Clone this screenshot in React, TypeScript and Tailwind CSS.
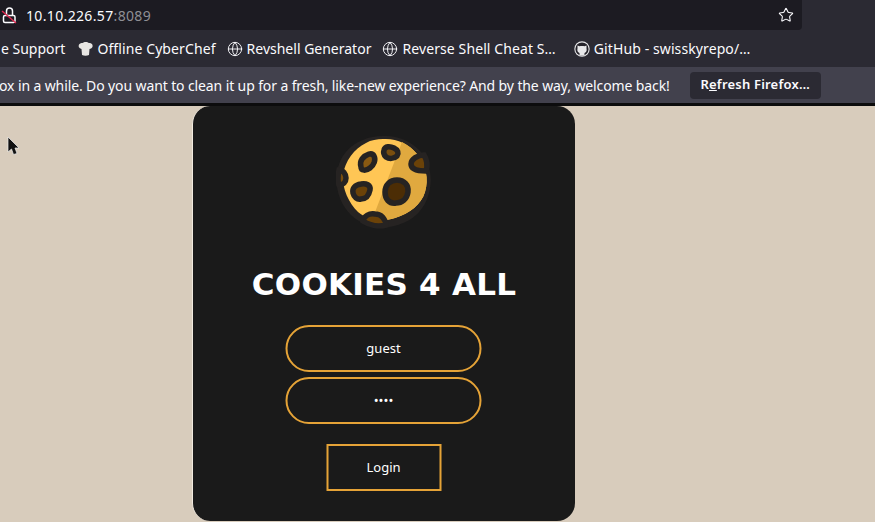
import { Star, Globe } from "lucide-react";

const uiFont = "font-['Noto_Sans',sans-serif]";

function Cookie() {
  return (
    <svg width="96" height="94" viewBox="0 0 96 94" className="block">
      <path d="M47 1 C60 0 74 5 84 16 C94 28 97 42 93 58 C89 74 78 85 62 90 C45 95 28 92 15 80 C4 69 -1 54 1 38 C3 22 13 10 27 5 C33 2 40 1 47 1 Z" fill="#262322" />
      <path d="M47 4 C60 3 73 9 81 19 C90 30 93 44 89 57 C85 70 74 78 59 83 C46 87 33 86 22 77 C13 68 6 54 7 40 C9 26 18 14 30 8 C35 5 41 4 47 4 Z" fill="#ffc655" />
      <path d="M66 7 C72 10 77 14 81 19 C90 30 93 44 89 57 C85 70 74 78 59 83 C52 85 43 86 36 85 Z" fill="#e0a93f" />
      <g stroke="#262322" strokeWidth="5.5">
        <path d="M26 24 C30 19 36 17 38 21 C40 25 38 30 34 33 C30 36 25 36 25 32 C24 29 24 27 26 24 Z" fill="#8a5a12" />
        <path d="M48 15 C49 11 54 11 58 13 C62 15 63 18 61 21 C58 24 53 24 50 22 C48 20 47 18 48 15 Z" fill="#7a4e0e" />
        <path d="M17 58 C16 53 19 50 25 49 C30 48 35 50 34 55 C33 60 30 64 25 64 C21 65 18 62 17 58 Z" fill="#6b4208" />
        <path d="M49 57 C49 50 54 45 61 45 C68 45 73 50 72 57 C71 64 66 68 60 68 C53 69 49 64 49 57 Z" fill="#4c2d05" />
        <path d="M88 20 C82 20 75 24 75 29 C75 34 80 36 90 36 C92 30 91 25 88 20 Z" fill="#6b4208" />
        <path d="M3 35 C7 35 10 39 10 43 C10 47 7 50 3 50 C1 45 2 40 3 35 Z" fill="#7a4e0e" />
        <path d="M27 86 C28 81 33 78 39 79 C45 79 49 83 50 90 C42 92 33 90 27 86 Z" fill="#6b4208" />
      </g>
    </svg>
  );
}

function Bookmark({ icon, label, className }: { icon: React.ReactNode; label: string; className?: string }) {
  return (
    <div className="flex items-center gap-[4px] whitespace-nowrap">
      {icon}
      <span className={className}>{label}</span>
    </div>
  );
}

export default function App() {
  return (
    <div className="relative w-[875px] h-[522px] overflow-hidden flex flex-col bg-[#d8ccbc]">
      {/* browser chrome */}
      <div className={`${uiFont} shrink-0 bg-[#2b2a33] text-[#fbfbfe]`}>
        <div className="h-[30px] w-[802px] bg-[#1c1b22] rounded-br-[4px] flex items-center">
          <svg width="16" height="18" viewBox="0 0 16 18" className="ml-[1px]">
            <path d="M5.5 10 V5 a3 3 0 0 1 6 0 V10" fill="none" stroke="#fbfbfe" strokeWidth="1.5" />
            <rect x="2.5" y="9.5" width="11.5" height="7" rx="1.5" fill="none" stroke="#fbfbfe" strokeWidth="1.5" />
            <path d="M1 5 L15 17" stroke="#e22850" strokeWidth="1.4" />
          </svg>
          <div className="ml-[9px] text-[14px] tracking-[0.35px]">
            10.10.226.57<span className="text-[#8f8f94]">:8089</span>
          </div>
          <Star className="ml-auto mr-[8px] w-[16px] h-[16px] text-[#fbfbfe]" strokeWidth={1.6} />
        </div>
        <div className="h-[37px] flex items-center text-[14px] overflow-hidden">
          <span className="ml-[1px] mr-[13px] whitespace-nowrap">e Support</span>
          <div className="mr-[11px]">
            <Bookmark
              label="Offline CyberChef"
              className="tracking-[0.1px]"
              icon={
                <svg width="15" height="16" viewBox="0 0 15 16">
                  <path d="M4 14 L3.5 8 C1 7.5 0 5.5 1 3.5 C2 2 3.5 2 4.5 2 C6 0.5 9.5 0.5 11 2 C12.5 2 14 2.5 14.5 4 C15 6 14 7.5 11.5 8 L11 14 C9 15 6 15 4 14 Z" fill="#e8e6e3" />
                </svg>
              }
            />
          </div>
          <div className="mr-[11px]">
            <Bookmark label="Revshell Generator" icon={<Globe className="w-[16px] h-[16px]" strokeWidth={1.4} />} />
          </div>
          <div className="mr-[18px]">
            <Bookmark label="Reverse Shell Cheat S…" className="tracking-[0.1px]" icon={<Globe className="w-[16px] h-[16px]" strokeWidth={1.4} />} />
          </div>
          <Bookmark
            label="GitHub - swisskyrepo/…"
            className="tracking-[0.1px]"
            icon={
              <svg width="16" height="16" viewBox="0 0 16 16">
                <circle cx="8" cy="8" r="7.7" fill="#e8e8ea" />
                <circle cx="8" cy="8" r="6.6" fill="#24222a" />
                <path d="M5.5 14.5 V12 C3.5 11 3 9.5 3.5 7.5 L3.5 4.5 L5.5 5.3 C7 4.9 9 4.9 10.5 5.3 L12.5 4.5 L12.5 7.5 C13 9.5 12.5 11 10.5 12 V14.5 Z" fill="#e8e8ea" />
              </svg>
            }
          />
        </div>
        <div className="h-[36px] bg-[#42414d] flex items-center text-[14px] overflow-hidden">
          <span className="-ml-[1px] whitespace-nowrap tracking-[-0.115px]">
            ox in a while. Do you want to clean it up for a fresh, like-new experience? And by the way, welcome back!
          </span>
          <div className="ml-[20px] w-[131px] h-[27px] shrink-0 rounded-[4px] bg-[#2b2a33] flex items-center justify-center text-[13px] font-semibold tracking-[0.2px] whitespace-nowrap">
            R<span className="underline">e</span>fresh Firefox…
          </div>
        </div>
        <div className="h-[3px] bg-[#0c0c0d]" />
      </div>

      {/* page */}
      <div className="flex-1 min-h-0 flex items-start pl-[192px]">
        <div className="w-[383px] h-[415px] shrink-0 rounded-[18px] bg-[#1a1a1a] flex flex-col items-center border-l border-[#f1eadf]">
          <div className="mt-[29px]">
            <Cookie />
          </div>
          <h1 className="mt-[36px] font-['DejaVu_Sans',sans-serif] font-bold text-[31px] leading-[38px] tracking-[0.25px] text-white">
            COOKIES 4 ALL
          </h1>
          <div className={`${uiFont} mt-[22px] flex flex-col items-center text-[13px] text-white -translate-x-[0.5px]`}>
            <div className="w-[196px] h-[47px] rounded-[24px] border-2 border-[#e5a337] flex items-center justify-center">guest</div>
            <div className="mt-[5px] w-[196px] h-[47px] rounded-[24px] border-2 border-[#e5a337] flex items-center justify-center">••••</div>
            <div className="mt-[20px] w-[115px] h-[47px] border-2 border-[#e5a337] flex items-center justify-center">Login</div>
          </div>
        </div>
      </div>

      {/* mouse pointer from the capture */}
      <svg width="13" height="20" viewBox="0 0 13 20" className="absolute left-[7px] top-[136px]">
        <path d="M1 1 L1 16 L4.5 13 L6.5 18.5 L10 17.5 L8 12 L12 12 Z" fill="#111" stroke="#eee" strokeWidth="0.7" />
      </svg>
    </div>
  );
}
